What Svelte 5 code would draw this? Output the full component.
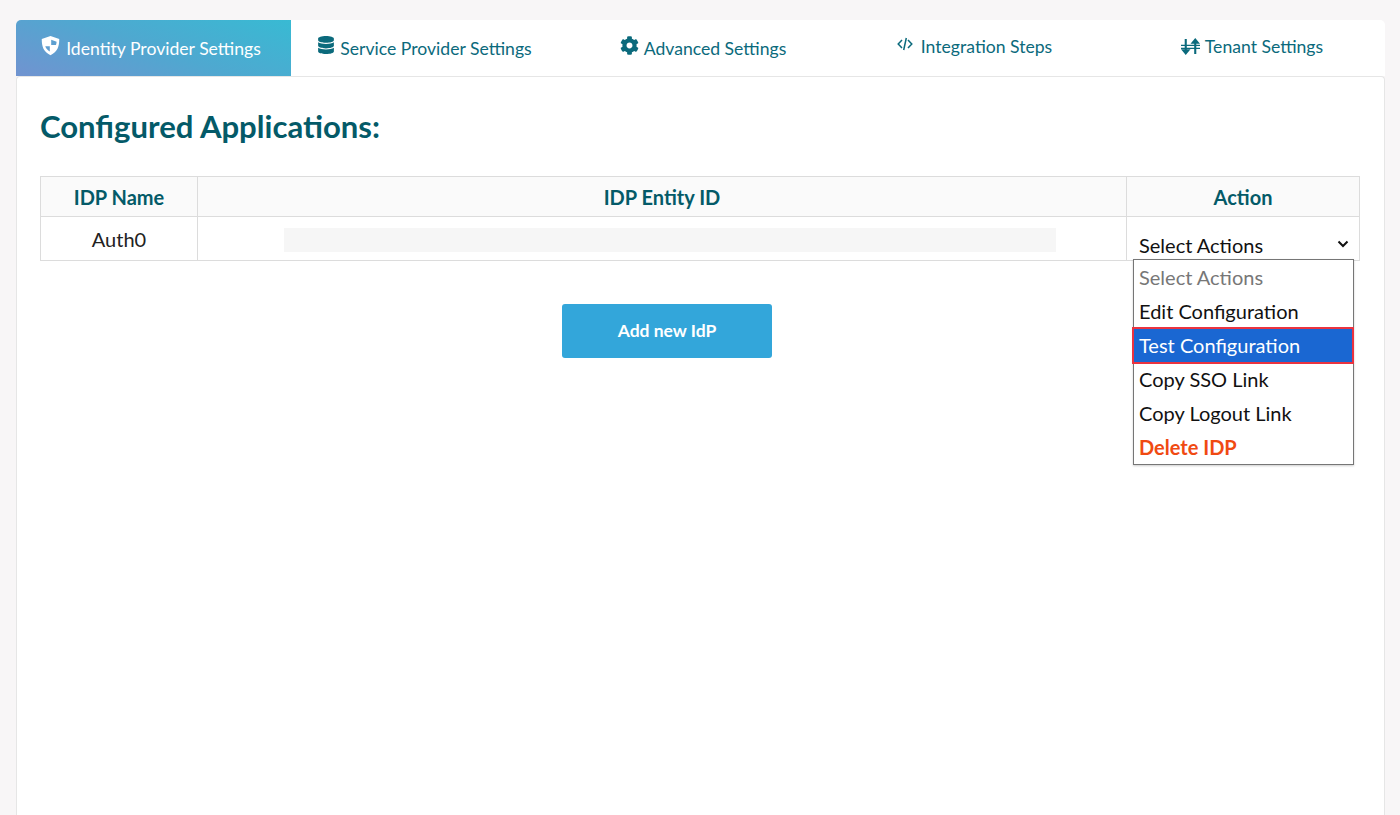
<script>
  const tabs = [
    { label: "Identity Provider Settings", icon: "shield", active: true },
    { label: "Service Provider Settings", icon: "database" },
    { label: "Advanced Settings", icon: "cog" },
    { label: "Integration Steps", icon: "code" },
    { label: "Tenant Settings", icon: "exchange" }
  ];
  const options = ["Edit Configuration", "Test Configuration", "Copy SSO Link", "Copy Logout Link"];
</script>

<div class="page">
  <ul class="tabs">
    {#each tabs as tab}
      <li class="tab {tab.icon}-tab" class:active={tab.active}>
        {#if tab.icon === "shield"}
          <svg class="icon shield" viewBox="0 0 24 24" aria-hidden="true">
            <path fill="currentColor" fill-rule="evenodd" d="M12 1 22 4.600C22 13 20 19.500 12 23 4 19.500 2 13 2 4.600ZM12.800 5.500V11.500H18.300C18.700 10.300 18.900 9 19 7.800ZM11.200 12.800H6C7 15.500 8.800 17.400 11.200 18.800Z" />
          </svg>
        {:else if tab.icon === "database"}
          <svg class="icon database" viewBox="0 0 448 512" aria-hidden="true">
            <path fill="currentColor" d="M448 73.143v45.714C448 159.143 347.667 192 224 192S0 159.143 0 118.857V73.143C0 32.857 100.333 0 224 0s224 32.857 224 73.143zM448 176v102.857C448 319.143 347.667 352 224 352S0 319.143 0 278.857V176c48.125 33.143 136.208 48.572 224 48.572S399.874 209.143 448 176zm0 160v102.857C448 479.143 347.667 512 224 512S0 479.143 0 438.857V336c48.125 33.143 136.208 48.572 224 48.572S399.874 369.143 448 336z" />
          </svg>
        {:else if tab.icon === "cog"}
          <svg class="icon cog" viewBox="0 0 512 512" aria-hidden="true">
            <path fill="currentColor" d="M487.4 315.7l-42.6-24.6c4.3-23.2 4.3-47 0-70.2l42.6-24.6c4.9-2.8 7.1-8.6 5.5-14-11.1-35.6-30-67.8-54.7-94.6-3.8-4.1-10-5.1-14.8-2.3L380.8 110c-17.9-15.4-38.5-27.3-60.8-35.1V25.8c0-5.6-3.9-10.5-9.4-11.7-36.7-8.2-74.3-7.8-109.2 0-5.5 1.2-9.4 6.1-9.4 11.7V75c-22.2 7.9-42.8 19.8-60.8 35.1L88.7 85.5c-4.9-2.8-11-1.9-14.8 2.3-24.7 26.7-43.6 58.9-54.7 94.6-1.7 5.4.6 11.2 5.5 14L67.3 221c-4.3 23.2-4.3 47 0 70.2l-42.6 24.6c-4.9 2.8-7.1 8.6-5.5 14 11.1 35.6 30 67.8 54.7 94.6 3.8 4.1 10 5.1 14.8 2.3l42.6-24.6c17.9 15.4 38.5 27.3 60.8 35.1v49.2c0 5.6 3.9 10.5 9.4 11.7 36.7 8.2 74.3 7.8 109.2 0 5.5-1.2 9.4-6.1 9.4-11.7v-49.2c22.2-7.9 42.8-19.8 60.8-35.1l42.6 24.6c4.9 2.8 11 1.9 14.8-2.3 24.7-26.7 43.6-58.9 54.7-94.6 1.5-5.5-.7-11.3-5.6-14.1zM256 336c-44.1 0-80-35.9-80-80s35.9-80 80-80 80 35.9 80 80-35.9 80-80 80z" />
          </svg>
        {:else if tab.icon === "code"}
          <svg class="icon code" viewBox="0 0 16 16" aria-hidden="true">
            <path fill="none" stroke="currentColor" stroke-width="1.5" d="M5 4 1.200 8 5 12M11 4l3.800 4-3.800 4M9.300 2 6.700 14" />
          </svg>
        {:else}
          <svg class="icon exchange" viewBox="0 0 20 20" aria-hidden="true">
            <path fill="currentColor" d="M15 1 20 7H16.100V18H13.900V7H10ZM0 8.200H20V9.600H0ZM0 11.200H20V12.600H0ZM3.900 2H6.100V13H10L5 19 0 13H3.900Z" />
          </svg>
        {/if}
        <span>{tab.label}</span>
      </li>
    {/each}
  </ul>

  <div class="panel">
    <h2>Configured Applications:</h2>

    <table>
      <thead>
        <tr>
          <th class="name">IDP Name</th>
          <th>IDP Entity ID</th>
          <th class="action">Action</th>
        </tr>
      </thead>
      <tbody>
        <tr>
          <td>Auth0</td>
          <td><div class="blank"></div></td>
          <td class="select-cell">
            <div class="select">
              <span>Select Actions</span>
              <svg viewBox="0 0 12 8" aria-hidden="true">
                <path fill="none" stroke="currentColor" stroke-width="2" d="M1.5 1.5 6 6l4.5-4.5" />
              </svg>
            </div>
            <ul class="menu">
              <li class="placeholder">Select Actions</li>
              {#each options as option, i}
                <li class:selected={i === 1}>{option}</li>
              {/each}
              <li class="danger">Delete IDP</li>
            </ul>
          </td>
        </tr>
      </tbody>
    </table>

    <div class="actions">
      <button type="button">Add new IdP</button>
    </div>
  </div>
</div>

<style>
  :global(body) {
    margin: 0;
    background: #f8f6f7;
    font-family: Lato, "Liberation Sans", sans-serif;
    overflow: hidden;
  }

  .page {
    height: 815px;
    box-sizing: border-box;
    padding: 20px 15px 0 16px;
    display: flex;
    flex-direction: column;
  }

  .tabs {
    list-style: none;
    margin: 0;
    padding: 0;
    height: 56px;
    display: grid;
    grid-template-columns: 275px 268px 288px 255px 1fr;
    background: #fff;
    border-radius: 5px 5px 0 0;
  }

  .tab {
    display: flex;
    align-items: center;
    justify-content: center;
    gap: 6px;
    color: #0b6a7c;
    font-size: 17.6px;
    box-sizing: border-box;
  }

  .code-tab,
  .exchange-tab {
    padding-bottom: 3px;
  }

  .exchange-tab {
    padding-left: 17px;
  }

  .tab.active {
    color: #fff;
    padding-right: 6px;
    border-radius: 5px 0 0 0;
    background: linear-gradient(20deg, #7193d0 0%, #4fa8d0 50%, #38bad3 100%);
  }

  .icon {
    display: block;
    position: relative;
    top: -3px;
  }

  .shield {
    width: 21px;
    height: 21px;
    margin-right: -1px;
  }

  .database {
    width: 16px;
    height: 18px;
  }

  .cog {
    width: 19px;
    height: 19px;
    margin-right: -1px;
  }

  .code {
    width: 16px;
    height: 16px;
    margin-right: 2px;
  }

  .exchange {
    width: 19px;
    height: 19px;
    margin-right: -1px;
    top: 0;
  }

  .panel {
    flex: 1;
    background: #fff;
    border: 1px solid #e6e6e6;
    border-bottom: none;
    border-radius: 4px 4px 0 0;
    padding: 0 24px 0 23px;
  }

  h2 {
    margin: 29px 0 30px;
    font-size: 31.1px;
    line-height: 40px;
    font-weight: 700;
    color: #045a68;
  }

  table {
    width: 100%;
    border-collapse: collapse;
    table-layout: fixed;
  }

  th,
  td {
    border: 1px solid #dcdcdc;
    text-align: center;
    padding: 0;
  }

  th {
    height: 39px;
    background: #fafafa;
    color: #045a68;
    font-size: 20px;
    font-weight: 700;
  }

  td {
    height: 43px;
    font-size: 20px;
    color: #222;
  }

  .name {
    width: 156px;
  }

  .action {
    width: 232px;
  }

  .blank {
    height: 24px;
    margin: 2px 70px 0 86px;
    background: #f6f6f6;
  }

  .select-cell {
    position: relative;
    text-align: left;
  }

  .select {
    display: flex;
    align-items: center;
    justify-content: space-between;
    padding: 12px 10px 0 12px;
    height: 31px;
    color: #111;
  }

  .select svg {
    width: 12px;
    height: 8px;
    margin-top: -1px;
  }

  .menu {
    list-style: none;
    margin: 0;
    padding: 0;
    position: absolute;
    top: 42px;
    left: 6px;
    width: 219px;
    background: #fff;
    border: 1px solid #767676;
    box-shadow: 0 1px 2px rgba(0, 0, 0, 0.2);
    z-index: 2;
    color: #111;
  }

  .menu li {
    height: 34px;
    line-height: 34px;
    padding-left: 5px;
    box-sizing: border-box;
  }

  .menu .placeholder {
    color: #777;
  }

  .menu .selected {
    background: #1a67d2;
    color: #fff;
    margin: -1px -1px -2px -2px;
    line-height: 32px;
    border: 2px solid #ea3340;
    height: 37px;
    position: relative;
  }

  .menu .danger {
    color: #f04a12;
    font-weight: 700;
  }

  .actions {
    display: flex;
    justify-content: center;
    margin-top: 43px;
    padding-right: 66px;
  }

  button {
    width: 210px;
    height: 54px;
    border: none;
    border-radius: 3px;
    padding: 0 0 2px;
    background: #33a6da;
    color: #fff;
    font-family: inherit;
    font-size: 17.5px;
    font-weight: 700;
  }
</style>
